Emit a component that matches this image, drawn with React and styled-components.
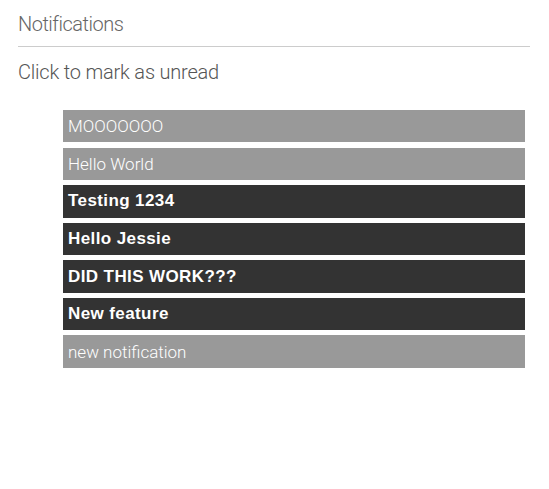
import React from "react";
import styled, { createGlobalStyle } from "styled-components";

const GlobalStyle = createGlobalStyle`
  body {
    margin: 0;
    background: #fff;
    font-family: "Roboto", "Liberation Sans", sans-serif;
  }
`;

const notifications = [
  { id: 1, text: "MOOOOOOO", read: true },
  { id: 2, text: "Hello World", read: true },
  { id: 3, text: "Testing 1234", read: false },
  { id: 4, text: "Hello Jessie", read: false },
  { id: 5, text: "DID THIS WORK???", read: false },
  { id: 6, text: "New feature", read: false },
  { id: 7, text: "new notification", read: true },
];

const App = () => {
  return (
    <Page>
      <GlobalStyle />
      <Header>
        <Title>Notifications</Title>
      </Header>
      <Hint>Click to mark as unread</Hint>
      <List>
        {notifications.map((item) => (
          <Item key={item.id} $read={item.read}>
            {item.text}
          </Item>
        ))}
      </List>
    </Page>
  );
};

const Page = styled.div`
  padding: 11.5px 19px 0 18px;
`;

const Header = styled.div`
  padding-bottom: 10.5px;
  border-bottom: 1px solid #cccccc;
`;

const Title = styled.h1`
  margin: 0;
  font-size: 20px;
  line-height: 24px;
  font-weight: 300;
  letter-spacing: -0.5px;
  color: #666;
`;

const Hint = styled.p`
  margin: 12.5px 0 0;
  font-size: 20px;
  line-height: 24px;
  font-weight: 300;
  letter-spacing: -0.2px;
  color: #555;
`;

const List = styled.ul`
  list-style: none;
  margin: 26.5px 5px 0 45px;
  padding: 0;
`;

const Item = styled.li`
  display: flex;
  align-items: center;
  height: 32.4px;
  margin-bottom: 5.2px;
  padding-left: 5px;
  font-size: 17px;
  color: #fff;
  background: ${(p) => (p.$read ? "#999999" : "#333333")};
  font-weight: ${(p) => (p.$read ? 300 : 700)};
  letter-spacing: ${(p) => (p.$read ? "0" : "0.4px")};
  font-family: ${(p) =>
    p.$read ? '"Roboto", sans-serif' : '"Liberation Sans", Arial, sans-serif'};
  cursor: pointer;
`;

export default App;
